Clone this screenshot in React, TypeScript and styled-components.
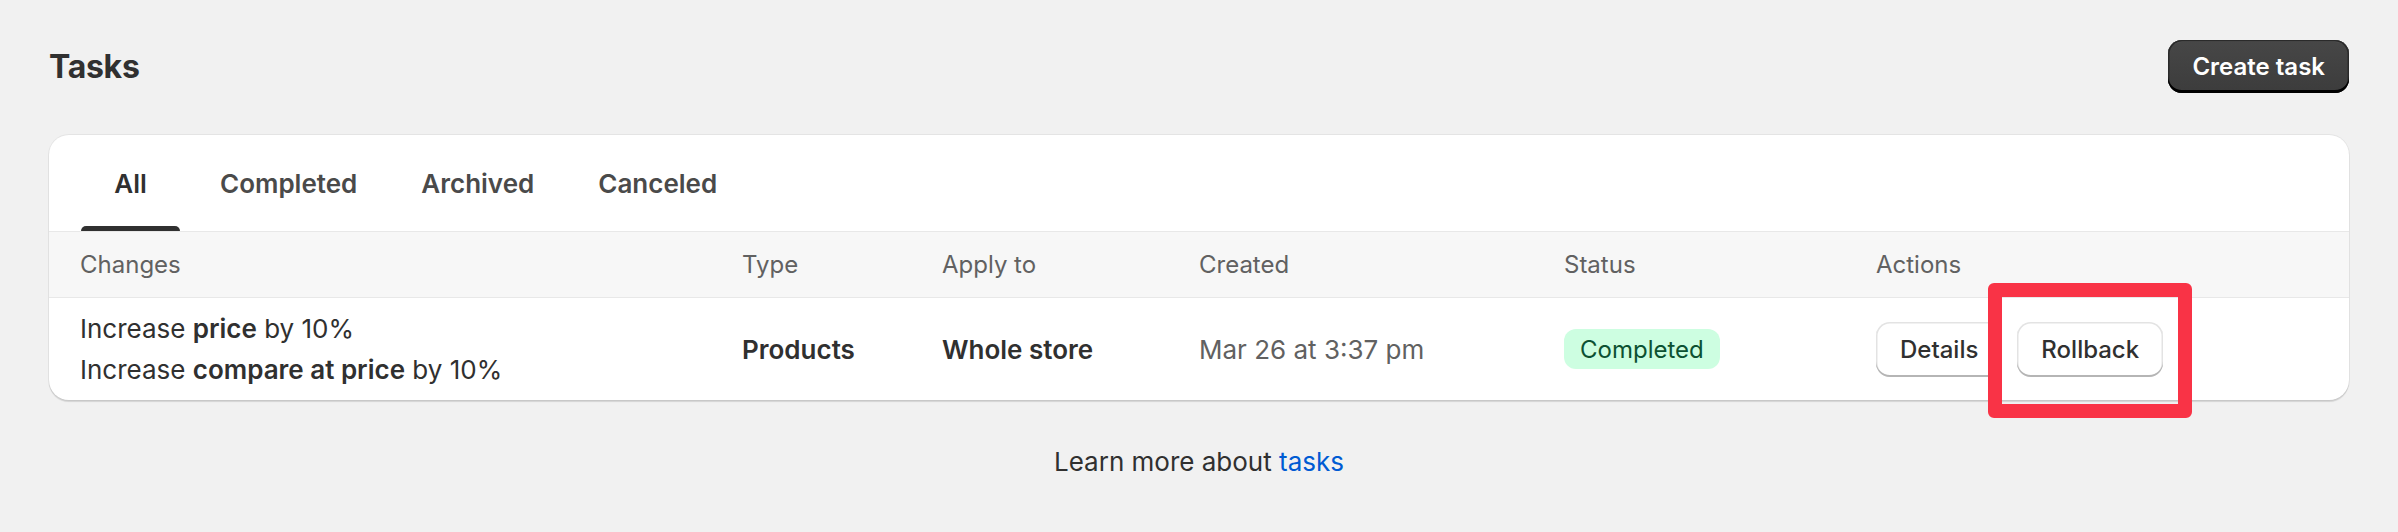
import styled, { createGlobalStyle } from "styled-components";

const GlobalStyle = createGlobalStyle`
  body {
    margin: 0;
    background: #f1f1f1;
    font-family: "Inter", "Liberation Sans", sans-serif;
    color: #303030;
  }
`;

const tabs = ["All", "Completed", "Archived", "Canceled"];
const columns = ["Changes", "Type", "Apply to", "Created", "Status", "Actions"];

export default function App() {
  return (
    <>
      <GlobalStyle />
      <Page>
        <PageHeader>
          <Title>Tasks</Title>
          <PrimaryButton>Create task</PrimaryButton>
        </PageHeader>

        <Card>
          <TabBar>
            {tabs.map((t, i) => (
              <Tab key={t} active={i === 0}>
                {t}
              </Tab>
            ))}
          </TabBar>

          <HeadRow>
            {columns.map((c) => (
              <HeadCell key={c}>{c}</HeadCell>
            ))}
          </HeadRow>

          <BodyRow>
            <Changes>
              <div>
                Increase <b>price</b> by 10%
              </div>
              <div>
                Increase <b>compare at price</b> by 10%
              </div>
            </Changes>
            <Cell strong>Products</Cell>
            <Cell strong>Whole store</Cell>
            <Cell muted>Mar 26 at 3:37 pm</Cell>
            <div>
              <Badge>Completed</Badge>
            </div>
            <Actions>
              <SecondaryButton>Details</SecondaryButton>
              <Highlight>
                <SecondaryButton>Rollback</SecondaryButton>
              </Highlight>
            </Actions>
          </BodyRow>
        </Card>

        <Footer>
          Learn more about <Link href="#">tasks</Link>
        </Footer>
      </Page>
    </>
  );
}

const Page = styled.div`
  padding: 40px 49px 0;
`;

const PageHeader = styled.div`
  display: flex;
  align-items: center;
  justify-content: space-between;
  margin-bottom: 42px;
`;

const Title = styled.h1`
  margin: 0;
  font-size: 32px;
  font-weight: 700;
  letter-spacing: -0.3px;
  color: #303030;
`;

const PrimaryButton = styled.button`
  height: 53px;
  padding: 0 24px;
  border: none;
  border-radius: 14px;
  font-family: inherit;
  font-size: 24px;
  font-weight: 600;
  color: #fff;
  background: linear-gradient(#474747, #3c3c3c);
  box-shadow: inset 0 -3px 0 0 #000, inset 0 0 0 1.5px #2a2a2a,
    inset 0 2px 0 0 #5e5e5e;
`;

const Card = styled.div`
  background: #fff;
  border-radius: 20px;
  box-shadow: 0 0 0 1px rgba(0, 0, 0, 0.05), 0 2px 1px rgba(0, 0, 0, 0.12);
`;

const TabBar = styled.div`
  display: flex;
  gap: 16px;
  padding: 0 32px;
  height: 96px;
`;

const Tab = styled.div<{ active?: boolean }>`
  position: relative;
  display: flex;
  align-items: center;
  justify-content: center;
  min-width: 99px;
  box-sizing: border-box;
  padding: 0 24px;
  font-size: 26px;
  font-weight: 600;
  color: ${({ active }) => (active ? "#303030" : "#4a4a4a")};

  &::after {
    content: "";
    display: ${({ active }) => (active ? "block" : "none")};
    position: absolute;
    left: 0;
    right: 0;
    bottom: 0;
    height: 5px;
    border-radius: 6px 6px 0 0;
    background: #303030;
  }
`;

const gridCols = "662px 200px 257px 365px 312px 1fr";

const HeadRow = styled.div`
  display: grid;
  grid-template-columns: ${gridCols};
  align-items: center;
  height: 65px;
  padding: 0 31px;
  background: #f7f7f7;
  border-top: 1px solid #e8e8e8;
`;

const HeadCell = styled.div`
  font-size: 24px;
  color: #616161;
`;

const BodyRow = styled.div`
  display: grid;
  grid-template-columns: ${gridCols};
  align-items: center;
  padding: 10px 31px;
  border-top: 1px solid #e8e8e8;
`;

const Changes = styled.div`
  font-size: 26px;
  line-height: 41px;
  color: #303030;

  b {
    font-weight: 600;
  }
`;

const Cell = styled.div<{ strong?: boolean; muted?: boolean }>`
  font-size: 26px;
  font-weight: ${({ strong }) => (strong ? 600 : 400)};
  color: ${({ muted }) => (muted ? "#616161" : "#303030")};
`;

const Badge = styled.span`
  display: inline-flex;
  align-items: center;
  height: 40px;
  padding: 0 16px;
  border-radius: 12px;
  background: #cdfee1;
  color: #0c5132;
  font-size: 24px;
`;

const Actions = styled.div`
  display: flex;
  align-items: center;
  gap: 15px;
`;

const SecondaryButton = styled.button`
  height: 55px;
  padding: 0 24px;
  border: none;
  border-radius: 14px;
  background: #fff;
  font-family: inherit;
  font-size: 24px;
  font-weight: 550;
  color: #303030;
  box-shadow: inset 0 -2px 0 0 #b5b5b5, inset 0 0 0 1.5px #e3e3e3;
`;

const Highlight = styled.span`
  position: relative;
  display: inline-flex;

  &::after {
    content: "";
    position: absolute;
    top: -39px;
    bottom: -41px;
    left: -29px;
    right: -29px;
    border: 14px solid #f93346;
    border-radius: 6px;
    pointer-events: none;
  }
`;

const Footer = styled.p`
  margin: 42px 0 0;
  text-align: center;
  font-size: 26px;
  line-height: 40px;
  color: #303030;
`;

const Link = styled.a`
  color: #005bd3;
  text-decoration: none;
`;
